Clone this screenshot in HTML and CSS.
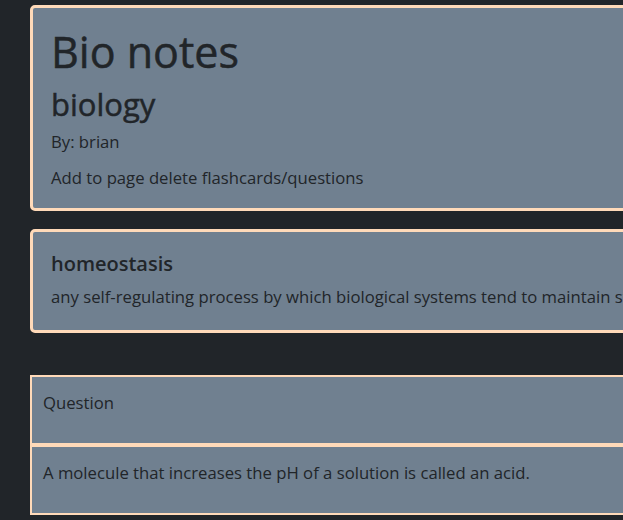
FILE: index.html
```html
<!DOCTYPE html>
<html lang="en">
<head>
<meta charset="utf-8">
<title>Bio notes</title>
<link rel="stylesheet" href="styles.css">
</head>
<body>
<main class="page">
  <section class="card">
    <h1 class="title">Bio notes</h1>
    <h2 class="subject">biology</h2>
    <p class="meta">By: brian</p>
    <p class="actions">Add to page delete flashcards/questions</p>
  </section>

  <section class="card card-term">
    <h5 class="term">homeostasis</h5>
    <p class="definition">any self-regulating process by which biological systems tend to maintain stability while adjusting to conditions that are optimal for survival</p>
  </section>

  <ul class="list">
    <li class="list-item"><p>Question</p></li>
    <li class="list-item"><p>A molecule that increases the pH of a solution is called an acid.</p></li>
  </ul>
</main>
</body>
</html>
```

FILE: styles.css
```css
html, body {
  margin: 0;
  padding: 0;
  background: #212529;
  overflow: hidden;
}

body {
  font-family: "Open Sans", "Noto Sans", sans-serif;
  font-size: 16.7px;
  line-height: 24px;
  color: #212529;
}

.page {
  width: 1200px;
  padding: 5px 0 0 30px;
}

.card {
  background: #708090;
  border: 3px solid #ffdab9;
  border-radius: 5px;
  padding: 19px 18px 18px;
  margin-bottom: 18px;
}

.card-term {
  padding-bottom: 21px;
}

.card p {
  margin: 0 0 12px;
}

.card p:last-child {
  margin-bottom: 0;
}

.title {
  font-size: 43px;
  font-weight: 500;
  line-height: 50px;
  margin: 0 0 9px;
  -webkit-text-stroke: 0.5px #212529;
}

.subject {
  font-size: 31px;
  font-weight: 500;
  line-height: 1.2;
  margin: 0 0 7px;
  -webkit-text-stroke: 0.5px #212529;
}

.term {
  font-size: 20px;
  font-weight: 600;
  line-height: 26px;
  margin: 0 0 8px;
}

.card + .list {
  margin-top: 42px;
}

.list {
  list-style: none;
  margin: 0;
  padding: 0;
}

.list-item {
  background: #708090;
  border: 2px solid #ffdab9;
  padding: 14px 11px 12px;
}

.list-item p {
  margin: 0 0 16px;
}
```
